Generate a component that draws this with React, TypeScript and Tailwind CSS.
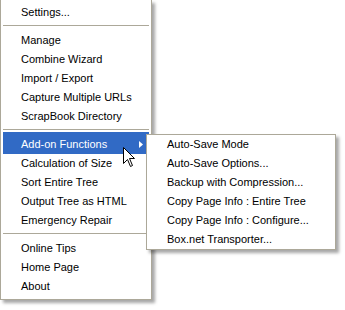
import React from 'react';

type Item = { label: string; sep?: false; sub?: boolean; active?: boolean } | { sep: true };

const mainItems: Item[] = [
  { label: 'Settings...' },
  { sep: true },
  { label: 'Manage' },
  { label: 'Combine Wizard' },
  { label: 'Import / Export' },
  { label: 'Capture Multiple URLs' },
  { label: 'ScrapBook Directory' },
  { sep: true },
  { label: 'Add-on Functions', sub: true, active: true },
  { label: 'Calculation of Size' },
  { label: 'Sort Entire Tree' },
  { label: 'Output Tree as HTML' },
  { label: 'Emergency Repair' },
  { sep: true },
  { label: 'Online Tips' },
  { label: 'Home Page' },
  { label: 'About' },
];

const subItems = [
  'Auto-Save Mode',
  'Auto-Save Options...',
  'Backup with Compression...',
  'Copy Page Info : Entire Tree',
  'Copy Page Info : Configure...',
  'Box.net Transporter...',
];

const font = "font-['Tahoma','Liberation_Sans',sans-serif] text-[11px]";

function MenuRow({ item }: { item: Item }) {
  if (item.sep) {
    return (
      <div className="h-[9px] pt-[3px]">
        <div className="h-px bg-[#aca899]" />
      </div>
    );
  }
  if (item.active) {
    // highlighted row reaches a little above its slot, like the XP menu
    return (
      <div className="-mt-[3px] flex h-[22px] items-center justify-between bg-[#316ac5] pl-[18px] pr-[6px] pt-[3px] leading-[19px] text-white">
        <span>{item.label}</span>
        {item.sub && (
          <svg width="4" height="7" viewBox="0 0 4 7">
            <path d="M0 0 L4 3.5 L0 7 Z" fill="currentColor" />
          </svg>
        )}
      </div>
    );
  }
  return (
    <div className="flex h-[19px] items-center justify-between pl-[18px] pr-[6px] leading-[19px] text-black">
      <span>{item.label}</span>
    </div>
  );
}

function Cursor() {
  return (
    <svg className="absolute left-[123px] top-[147px]" width="13" height="21" viewBox="0 0 13 21">
      <path
        d="M0.5 0.5 L0.5 16.5 L4.5 12.5 L7.5 19.5 L9.5 18.5 L6.5 11.5 L11.5 11.5 Z"
        fill="white"
        stroke="black"
        strokeWidth="1"
      />
    </svg>
  );
}

export default function App() {
  return (
    <div className={`relative h-[310px] w-[345px] overflow-hidden bg-white ${font}`}>
      <div className="w-[152px] border-x border-b border-[#aca899] bg-white px-[2px] pb-[3px] pt-[3px] shadow-[3px_3px_3px_rgba(0,0,0,0.35)]">
        {mainItems.map((item, i) => (
          <MenuRow key={i} item={item} />
        ))}
      </div>

      <div className="absolute left-[146px] top-[134px] w-[190px] border border-[#aca899] bg-white shadow-[3px_3px_3px_rgba(0,0,0,0.35)]">
        {subItems.map((label) => (
          <div key={label} className="h-[19px] pl-[20px] leading-[19px] text-black">
            {label}
          </div>
        ))}
      </div>

      <Cursor />
    </div>
  );
}
